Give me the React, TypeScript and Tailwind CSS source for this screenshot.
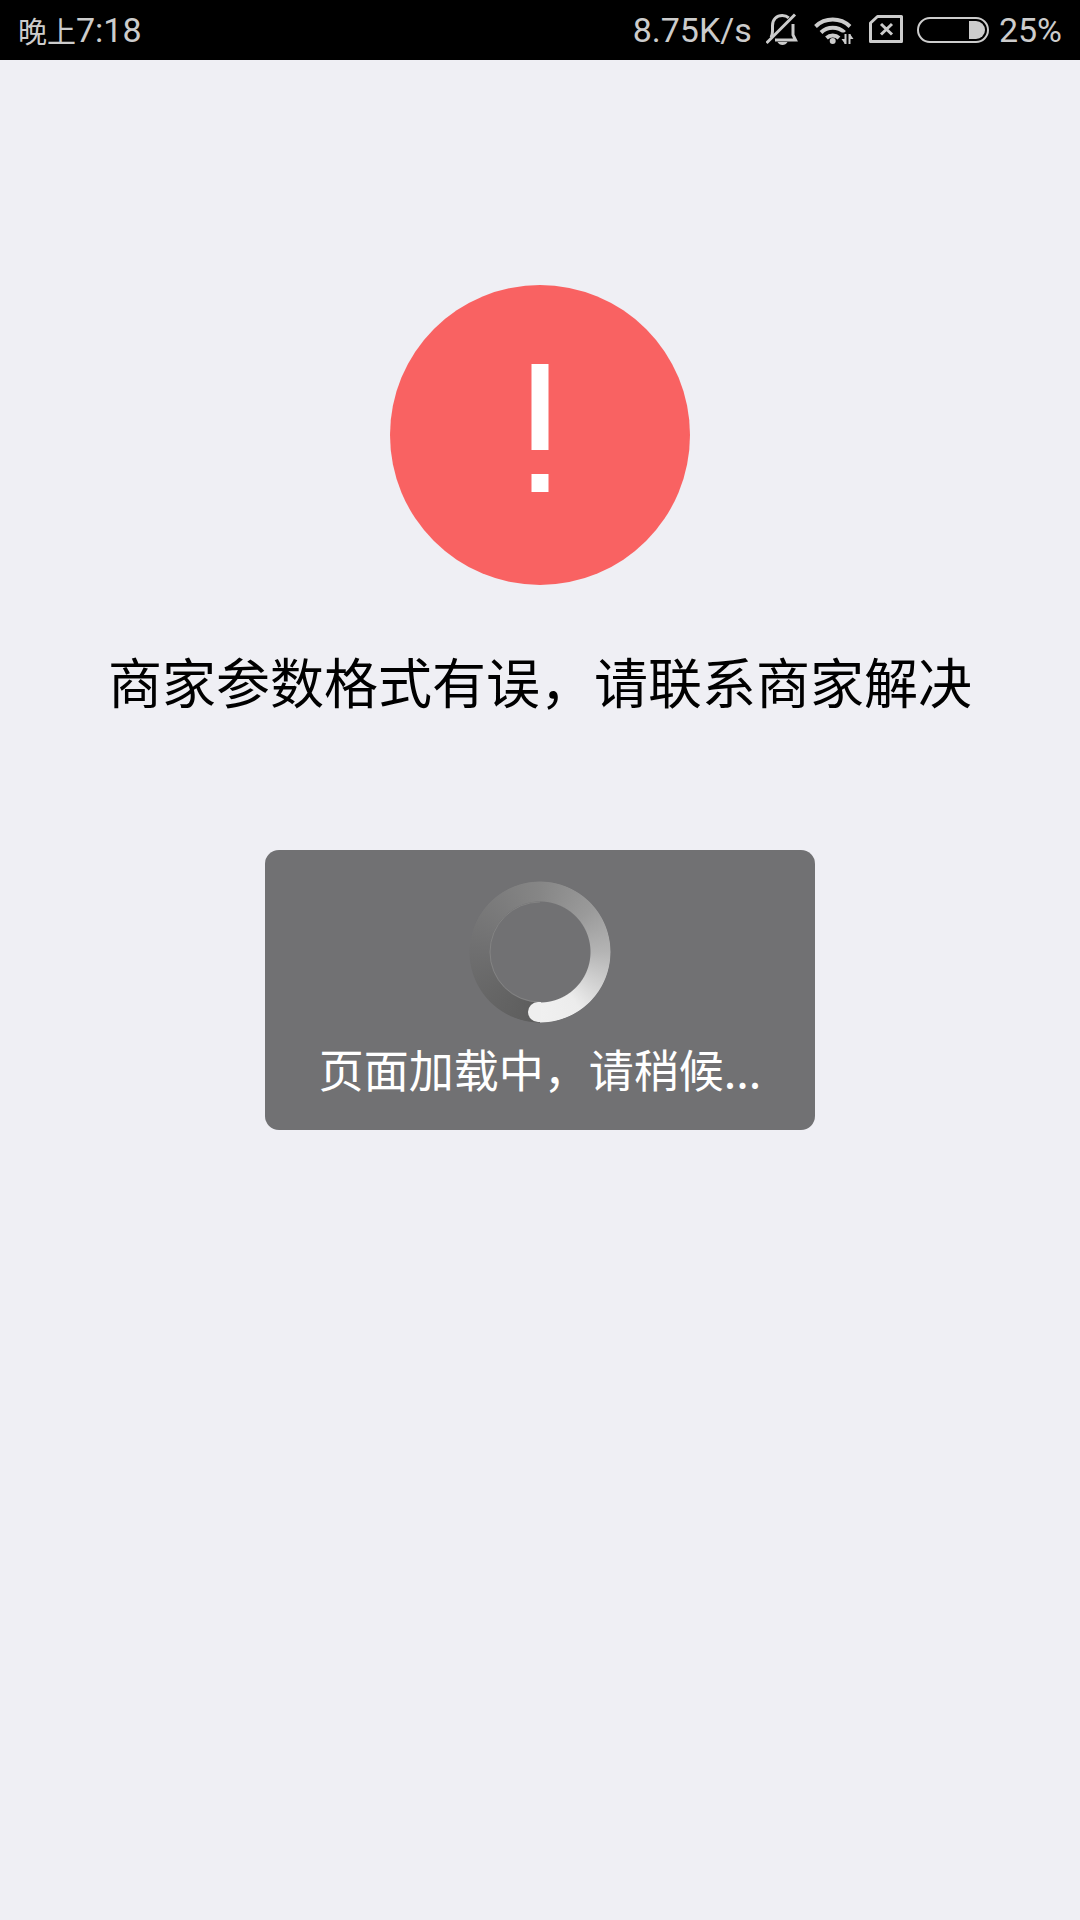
const sans = "font-['Noto_Sans_CJK_SC',sans-serif]";

function MutedBell() {
  return (
    <svg width="34" height="36" viewBox="0 0 34 36" fill="none" stroke="currentColor" strokeWidth="3" aria-label="静音">
      <path d="M0.5 31 29 2.5" />
      <path d="M5 25.5C6.2 23.5 6.5 21.5 6.5 19v-5.500C6.500 7.500 10.500 3.500 16.300 3.500c2.600 0 4.800.8 6.500 2.300" />
      <path d="M9 28h20.500l-2.500-5V12" />
      <path d="M11.500 30h10c-1 2-3 3-5 3s-4-1-5-3z" fill="currentColor" stroke="none" />
    </svg>
  );
}

function Wifi() {
  return (
    <svg width="41" height="36" viewBox="0 0 41 36" fill="none" stroke="currentColor" strokeWidth="4" aria-label="无线网络">
      <path d="M1.500 14.500a25 25 0 0 1 34.500 0" />
      <path d="M7 20.500a17 17 0 0 1 23.500 0" />
      <path d="M12.500 26a9 9 0 0 1 12.500 0" />
      <circle cx="18.700" cy="29" r="3" fill="currentColor" stroke="none" />
      <path d="M26.500 20.500h14v13h-11z" fill="#000" stroke="none" />
      <path d="M31.500 22v10M35.500 22v10" strokeWidth="2" />
      <path d="M31 32v-5h-3.500zM36 22v5h3.500z" fill="currentColor" stroke="none" />
    </svg>
  );
}

function NoSim() {
  return (
    <svg width="34" height="36" viewBox="0 0 34 36" fill="none" stroke="currentColor" strokeWidth="3" aria-label="无 SIM 卡">
      <path d="M8.500 4.500h24v25h-31V11z" strokeLinejoin="round" />
      <path d="m12 12 11 10.500M23 12 12 22.500" />
    </svg>
  );
}

function Battery() {
  return (
    <svg width="72" height="36" viewBox="0 0 72 36" fill="none" aria-label="电量">
      <rect x="1" y="6" width="70" height="24" rx="12" stroke="currentColor" strokeWidth="2" />
      <path d="M52 9h7a9 9 0 0 1 0 18h-7z" fill="currentColor" />
    </svg>
  );
}

function StatusBar() {
  return (
    <header className="flex h-15 items-center justify-between bg-black px-[18px] font-[Roboto,sans-serif] text-[34px] leading-none text-[#cccccc]">
      <time className="flex items-center">
        <span className={`${sans} text-[29px] leading-none`}>晚上</span>
        7:18
      </time>
      <div className="flex items-center gap-[14px]">
        <span>8.75K/s</span>
        <MutedBell />
        <Wifi />
        <NoSim />
        <div className="flex items-center gap-[10px]">
          <Battery />
          <span>25%</span>
        </div>
      </div>
    </header>
  );
}

function ErrorMark() {
  return (
    <svg width="300" height="300" viewBox="0 0 300 300" aria-label="错误">
      <circle cx="150" cy="150" r="150" fill="#f96262" />
      <path d="M141.500 79h17v86h-17zM141.500 189h17v18h-17z" fill="#fff" />
    </svg>
  );
}

function Spinner() {
  return (
    <div className="relative size-[142px]">
      <div className="size-full rounded-full bg-[conic-gradient(from_180deg,#5c5c5c,#666666_50deg,#707071_95deg,#868686_180deg,#9a9a9a_230deg,#b4b4b4_270deg,#d2d2d2_300deg,#ececec_325deg,#f0f0f0_360deg)] [mask-image:radial-gradient(circle,transparent_50px,black_51px,black_70px,transparent_71px)]" />
      <svg className="absolute inset-0" width="142" height="142" viewBox="0 0 142 142" fill="none">
        <path d="M71 121A50 50 0 0 1 71 21" stroke="#838383" />
        <path d="M72 121h-3a10 10 0 0 0 0 20h3z" fill="#efefef" />
      </svg>
    </div>
  );
}

export default function App() {
  return (
    <div className={`min-h-screen bg-[#efeff4] ${sans}`} lang="zh-CN">
      <StatusBar />
      <main className="flex flex-col items-center pt-[225px]">
        <ErrorMark />
        <h1 className="mt-14 text-[54px] leading-[80px] text-black">商家参数格式有误，请联系商家解决</h1>
        <div role="status" className="mt-[129px] flex flex-col items-center rounded-[14px] bg-[#717173] px-[54px] pt-[31px] pb-[29px] text-white">
          <Spinner />
          <p className="mt-[14px] text-[45px] leading-[64px]">页面加载中，请稍候...</p>
        </div>
      </main>
    </div>
  );
}
